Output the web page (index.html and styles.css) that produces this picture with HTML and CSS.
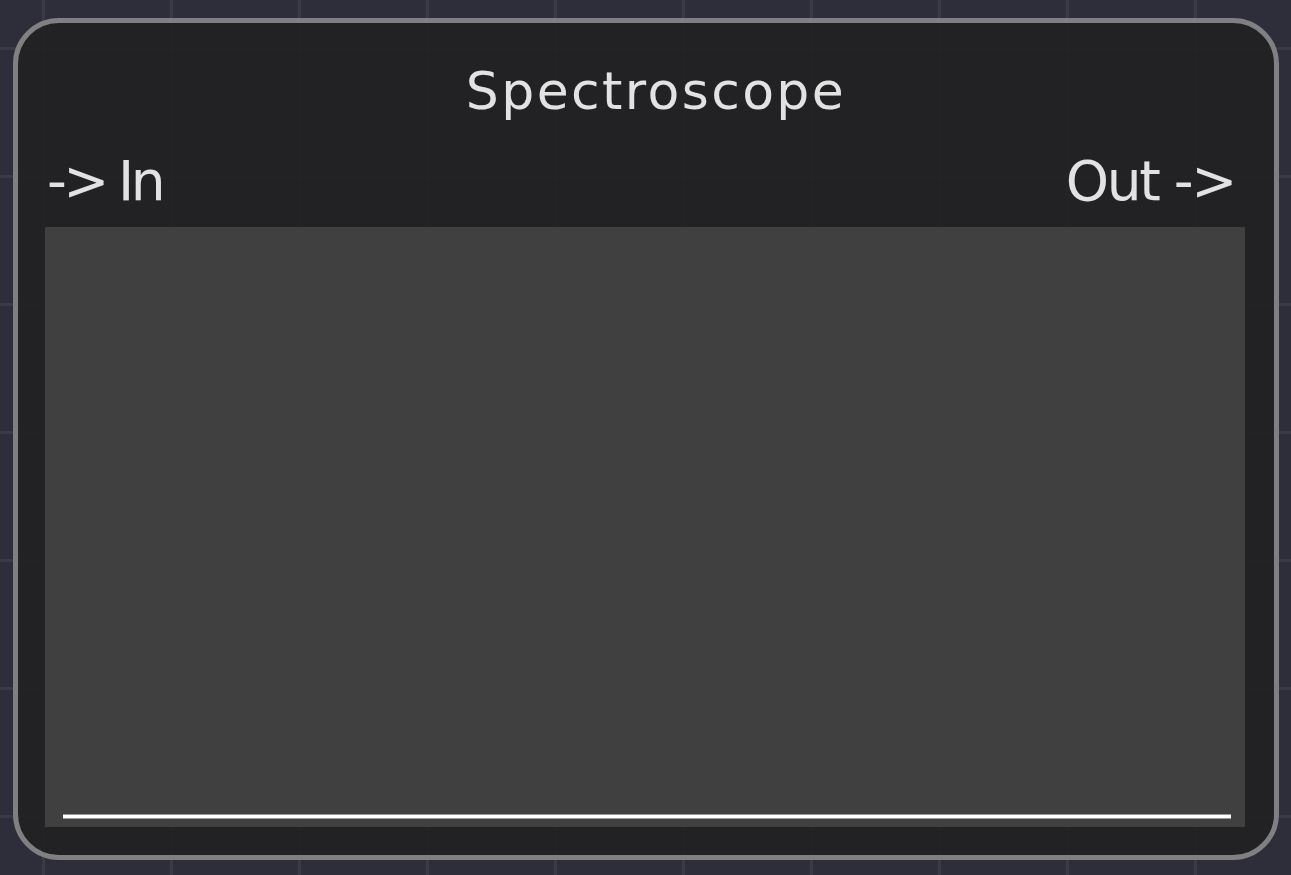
FILE: index.html
```html
<!DOCTYPE html>
<html>
<head>
<meta charset="utf-8">
<title>Spectroscope</title>
<link rel="stylesheet" href="styles.css">
</head>
<body>
<div class="node">
  <div class="node-title">Spectroscope</div>
  <div class="ports">
    <span class="port port-in">-&gt; In</span>
    <span class="port port-out">Out -&gt;</span>
  </div>
  <div class="scope">
    <div class="trace"></div>
  </div>
</div>
</body>
</html>
```

FILE: styles.css
```css
html, body {
  margin: 0;
  padding: 0;
}
body {
  width: 1291px;
  height: 875px;
  overflow: hidden;
  background-color: #2e2e3a;
  background-image:
    linear-gradient(to right, rgba(255,255,255,0.06) 0, rgba(255,255,255,0.06) 3px, transparent 3px),
    linear-gradient(to bottom, rgba(255,255,255,0.06) 0, rgba(255,255,255,0.06) 3px, transparent 3px);
  background-size: 128px 128px;
  background-position: 42px 47px;
  font-family: "DejaVu Sans", "Liberation Sans", sans-serif;
  color: #e2e2e2;
  padding: 18px 0 0 13px;
  box-sizing: border-box;
}
.node {
  width: 1266px;
  height: 842px;
  box-sizing: border-box;
  border: 5px solid #808080;
  border-radius: 46px;
  background: rgba(33, 33, 34, 0.93);
  padding: 38px 29px 0 27px;
  display: flex;
  flex-direction: column;
}
.node-title {
  font-size: 52px;
  line-height: 60px;
  height: 60px;
  text-align: center;
  padding-left: 22px;
  letter-spacing: 2.4px;
}
.ports {
  margin-top: 30px;
  display: flex;
  justify-content: space-between;
  font-size: 55px;
  line-height: 60px;
  height: 60px;
  padding: 0 12px 0 2px;
}
.port-in {
  letter-spacing: -3.5px;
  word-spacing: -2px;
}
.port-out {
  letter-spacing: -2.3px;
  margin-right: -2px;
}
.scope {
  margin-top: 16px;
  width: 1200px;
  height: 600px;
  background: rgba(66, 66, 66, 0.96);
  box-sizing: border-box;
  display: flex;
  align-items: flex-end;
  padding: 0 14px 8px 18px;
}
.trace {
  flex: 1;
  height: 3px;
  background: #ffffff;
  border-top: 1px solid #9a9a9a;
  border-bottom: 1px solid #9a9a9a;
}
```
